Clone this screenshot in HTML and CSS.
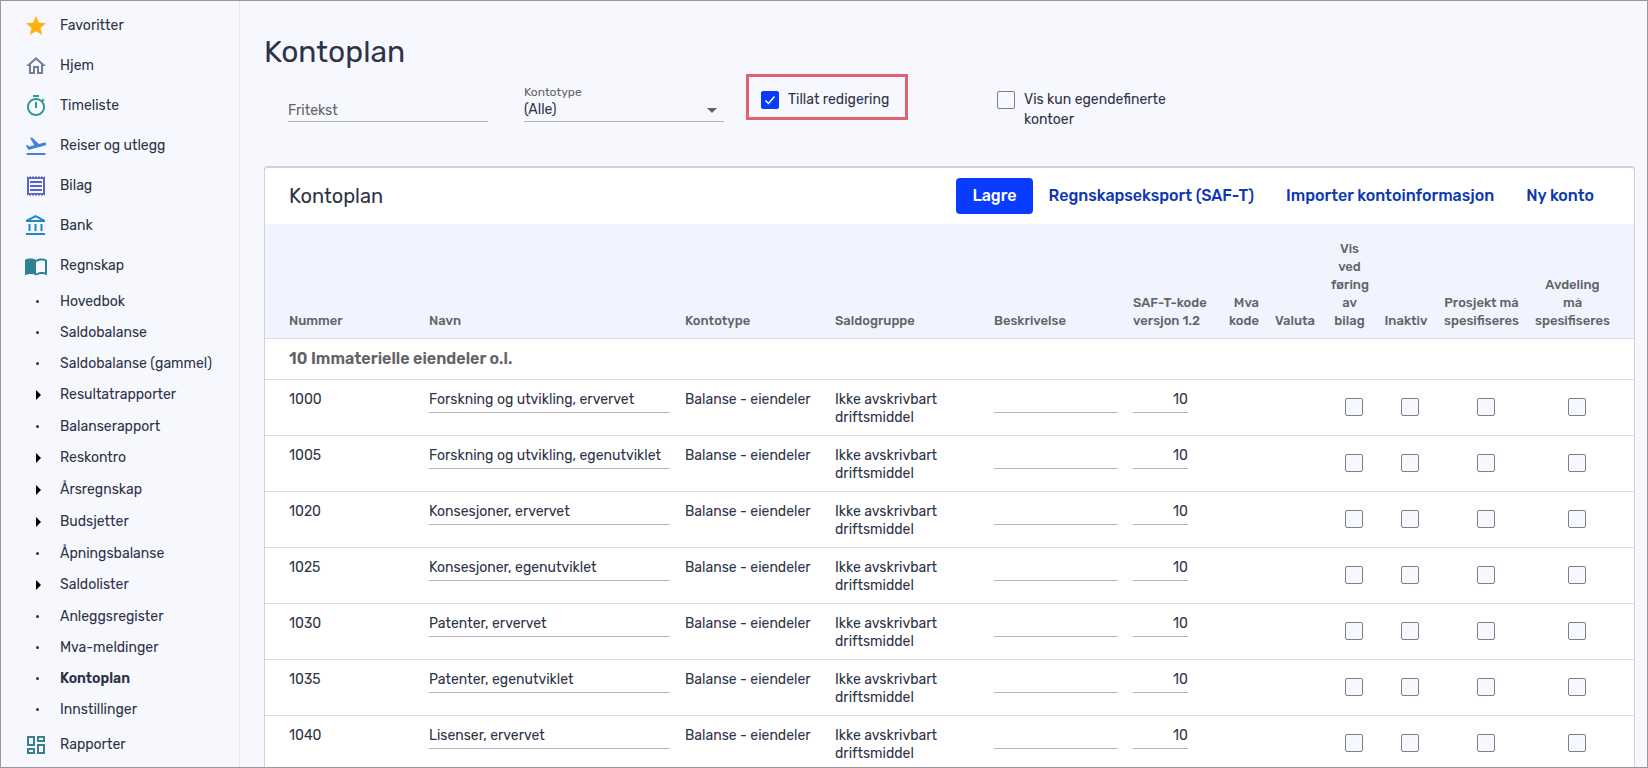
FILE: index.html
```
<!DOCTYPE html>
<html lang="no">
<head>
    <meta charset="UTF-8">
    <meta name="viewport" content="width=device-width, initial-scale=1.0">
    <title>Kontoplan</title>
    <link rel="stylesheet" href="styles.css">
</head>
<body>
    <div class="app">
        <nav class="sidebar">
            <a class="menu-item" href="#"><svg class="icon star" viewBox="0 0 24 24"><path d="M12 17.27L18.18 21l-1.64-7.03L22 9.24l-7.19-.61L12 2 9.19 8.63 2 9.24l5.46 4.73L5.82 21z"/></svg>Favoritter</a>
            <a class="menu-item" href="#"><svg class="icon home" viewBox="0 0 24 24"><path d="M12 5.69l5 4.5V18h-2v-6H9v6H7v-7.81l5-4.5M12 3L2 12h3v8h6v-6h2v6h6v-8h3L12 3z"/></svg>Hjem</a>
            <a class="menu-item" href="#"><svg class="icon timer" viewBox="0 0 24 24"><path d="M15 1H9v2h6V1zm-4 13h2V8h-2v6zm8.03-6.61l1.42-1.42c-.43-.51-.9-.99-1.41-1.41l-1.42 1.42C16.07 4.74 14.12 4 12 4c-4.97 0-9 4.03-9 9s4.02 9 9 9 9-4.03 9-9c0-2.12-.74-4.07-1.97-5.61zM12 20c-3.87 0-7-3.13-7-7s3.13-7 7-7 7 3.13 7 7-3.13 7-7 7z"/></svg>Timeliste</a>
            <a class="menu-item" href="#"><svg class="icon travel" viewBox="0 0 24 24"><path d="M2.5 19h19v2h-19zm19.57-9.36c-.21-.8-1.04-1.28-1.84-1.06L14.92 10l-6.9-6.43-1.93.51 4.14 7.17-4.97 1.33-1.97-1.54-1.45.39 1.82 3.16.77 1.33 1.6-.43 5.31-1.42 4.35-1.16L21 11.49c.81-.23 1.28-1.05 1.07-1.85z"/></svg>Reiser og utlegg</a>
            <a class="menu-item" href="#"><svg class="icon receipt" viewBox="0 0 24 24"><path d="M19.5 3.5L18 2l-1.5 1.5L15 2l-1.5 1.5L12 2l-1.5 1.5L9 2 7.5 3.5 6 2 4.5 3.5 3 2v20l1.5-1.5L6 22l1.5-1.5L9 22l1.5-1.5L12 22l1.5-1.5L15 22l1.5-1.5L18 22l1.5-1.5L21 22V2l-1.5 1.5zM19 19.09H5V4.91h14v14.18zM6 15h12v2H6zm0-4h12v2H6zm0-4h12v2H6z"/></svg>Bilag</a>
            <a class="menu-item" href="#"><svg class="icon bank" viewBox="0 0 24 24"><path d="M6.5 10h-2v7h2v-7zm6 0h-2v7h2v-7zm8.5 9H2v2h19v-2zm-2.5-9h-2v7h2v-7zm-7-6.74L16.71 6H6.29l5.21-2.74m0-2.26L2 6v2h19V6l-9.5-5z"/></svg>Bank</a>
            <a class="menu-item" href="#"><svg class="icon book" viewBox="0 0 24 24"><path d="M21 5c-1.11-.35-2.33-.5-3.5-.5-1.95 0-4.05.4-5.5 1.5-1.45-1.1-3.55-1.5-5.5-1.5S2.45 4.9 1 6v14.65c0 .25.25.5.5.5.1 0 .15-.05.25-.05C3.1 20.45 5.05 20 6.5 20c1.95 0 4.05.4 5.5 1.5 1.35-.85 3.8-1.5 5.5-1.5 1.65 0 3.35.3 4.75 1.05.1.05.15.05.25.05.25 0 .5-.25.5-.5V6c-.6-.45-1.25-.75-2-1zm0 13.5c-1.1-.35-2.3-.5-3.5-.5-1.7 0-4.15.65-5.5 1.5V8c1.35-.85 3.8-1.5 5.5-1.5 1.2 0 2.4.15 3.5.5v11.5z"/></svg>Regnskap</a>
            <div class="submenu">
                <a class="sub-item" href="#">Hovedbok</a>
                <a class="sub-item" href="#">Saldobalanse</a>
                <a class="sub-item" href="#">Saldobalanse (gammel)</a>
                <a class="sub-item expandable" href="#">Resultatrapporter</a>
                <a class="sub-item" href="#">Balanserapport</a>
                <a class="sub-item expandable" href="#">Reskontro</a>
                <a class="sub-item expandable" href="#">Årsregnskap</a>
                <a class="sub-item expandable" href="#">Budsjetter</a>
                <a class="sub-item" href="#">Åpningsbalanse</a>
                <a class="sub-item expandable" href="#">Saldolister</a>
                <a class="sub-item" href="#">Anleggsregister</a>
                <a class="sub-item" href="#">Mva-meldinger</a>
                <a class="sub-item active" href="#">Kontoplan</a>
                <a class="sub-item" href="#">Innstillinger</a>
            </div>
            <a class="menu-item" href="#"><svg class="icon reports" viewBox="0 0 24 24"><path d="M19 5v2h-4V5h4M9 5v6H5V5h4m10 8v6h-4v-6h4M9 17v2H5v-2h4M21 3h-8v6h8V3zM11 3H3v10h8V3zm10 8h-8v10h8V11zm-10 4H3v6h8v-6z"/></svg>Rapporter</a>
        </nav>

        <main class="content">
            <h1>Kontoplan</h1>

            <form class="filters">
                <div class="field">
                    <input type="text" id="fritekst" placeholder="Fritekst" aria-label="Fritekst">
                </div>
                <div class="field select-field">
                    <label for="kontotype">Kontotype</label>
                    <select id="kontotype">
                        <option>(Alle)</option>
                    </select>
                </div>
                <label class="check-field highlight"><input type="checkbox" class="checkbox" checked>Tillat redigering</label>
                <label class="check-field own-accounts"><input type="checkbox" class="checkbox">Vis kun egendefinerte kontoer</label>
            </form>

            <section class="card">
                <header class="card-header">
                    <h2>Kontoplan</h2>
                    <button type="button" class="button primary">Lagre</button>
                    <button type="button" class="button">Regnskapseksport (SAF-T)</button>
                    <button type="button" class="button">Importer kontoinformasjon</button>
                    <button type="button" class="button">Ny konto</button>
                </header>
                <table class="accounts">
                    <colgroup>
                        <col class="col-number">
                        <col class="col-name">
                        <col class="col-type">
                        <col class="col-group">
                        <col class="col-description">
                        <col class="col-saft">
                        <col class="col-vat">
                        <col class="col-currency">
                        <col class="col-show">
                        <col class="col-inactive">
                        <col class="col-project">
                        <col class="col-department">
                    </colgroup>
                    <thead>
                        <tr>
                            <th>Nummer</th>
                            <th>Navn</th>
                            <th>Kontotype</th>
                            <th>Saldogruppe</th>
                            <th>Beskrivelse</th>
                            <th>SAF-T-kode versjon 1.2</th>
                            <th class="right">Mva kode</th>
                            <th>Valuta</th>
                            <th class="center">Vis ved føring av bilag</th>
                            <th class="center">Inaktiv</th>
                            <th class="center">Prosjekt må spesifiseres</th>
                            <th class="center">Avdeling må spesifiseres</th>
                        </tr>
                    </thead>
                    <tbody>
                        <tr class="group-row">
                            <td colspan="12">10 Immaterielle eiendeler o.l.</td>
                        </tr>
                        <tr>
                            <td>1000</td>
                            <td><input type="text" class="cell-input" aria-label="Navn" value="Forskning og utvikling, ervervet"></td>
                            <td>Balanse - eiendeler</td>
                            <td>Ikke avskrivbart driftsmiddel</td>
                            <td><input type="text" class="cell-input" aria-label="Beskrivelse"></td>
                            <td><input type="text" class="cell-input code" aria-label="SAF-T-kode" value="10"></td>
                            <td></td>
                            <td></td>
                            <td class="check"><input type="checkbox" class="checkbox" aria-label="Vis ved føring av bilag"></td>
                            <td class="check"><input type="checkbox" class="checkbox" aria-label="Inaktiv"></td>
                            <td class="check"><input type="checkbox" class="checkbox" aria-label="Prosjekt må spesifiseres"></td>
                            <td class="check"><input type="checkbox" class="checkbox" aria-label="Avdeling må spesifiseres"></td>
                        </tr>
                        <tr>
                            <td>1005</td>
                            <td><input type="text" class="cell-input" aria-label="Navn" value="Forskning og utvikling, egenutviklet"></td>
                            <td>Balanse - eiendeler</td>
                            <td>Ikke avskrivbart driftsmiddel</td>
                            <td><input type="text" class="cell-input" aria-label="Beskrivelse"></td>
                            <td><input type="text" class="cell-input code" aria-label="SAF-T-kode" value="10"></td>
                            <td></td>
                            <td></td>
                            <td class="check"><input type="checkbox" class="checkbox" aria-label="Vis ved føring av bilag"></td>
                            <td class="check"><input type="checkbox" class="checkbox" aria-label="Inaktiv"></td>
                            <td class="check"><input type="checkbox" class="checkbox" aria-label="Prosjekt må spesifiseres"></td>
                            <td class="check"><input type="checkbox" class="checkbox" aria-label="Avdeling må spesifiseres"></td>
                        </tr>
                        <tr>
                            <td>1020</td>
                            <td><input type="text" class="cell-input" aria-label="Navn" value="Konsesjoner, ervervet"></td>
                            <td>Balanse - eiendeler</td>
                            <td>Ikke avskrivbart driftsmiddel</td>
                            <td><input type="text" class="cell-input" aria-label="Beskrivelse"></td>
                            <td><input type="text" class="cell-input code" aria-label="SAF-T-kode" value="10"></td>
                            <td></td>
                            <td></td>
                            <td class="check"><input type="checkbox" class="checkbox" aria-label="Vis ved føring av bilag"></td>
                            <td class="check"><input type="checkbox" class="checkbox" aria-label="Inaktiv"></td>
                            <td class="check"><input type="checkbox" class="checkbox" aria-label="Prosjekt må spesifiseres"></td>
                            <td class="check"><input type="checkbox" class="checkbox" aria-label="Avdeling må spesifiseres"></td>
                        </tr>
                        <tr>
                            <td>1025</td>
                            <td><input type="text" class="cell-input" aria-label="Navn" value="Konsesjoner, egenutviklet"></td>
                            <td>Balanse - eiendeler</td>
                            <td>Ikke avskrivbart driftsmiddel</td>
                            <td><input type="text" class="cell-input" aria-label="Beskrivelse"></td>
                            <td><input type="text" class="cell-input code" aria-label="SAF-T-kode" value="10"></td>
                            <td></td>
                            <td></td>
                            <td class="check"><input type="checkbox" class="checkbox" aria-label="Vis ved føring av bilag"></td>
                            <td class="check"><input type="checkbox" class="checkbox" aria-label="Inaktiv"></td>
                            <td class="check"><input type="checkbox" class="checkbox" aria-label="Prosjekt må spesifiseres"></td>
                            <td class="check"><input type="checkbox" class="checkbox" aria-label="Avdeling må spesifiseres"></td>
                        </tr>
                        <tr>
                            <td>1030</td>
                            <td><input type="text" class="cell-input" aria-label="Navn" value="Patenter, ervervet"></td>
                            <td>Balanse - eiendeler</td>
                            <td>Ikke avskrivbart driftsmiddel</td>
                            <td><input type="text" class="cell-input" aria-label="Beskrivelse"></td>
                            <td><input type="text" class="cell-input code" aria-label="SAF-T-kode" value="10"></td>
                            <td></td>
                            <td></td>
                            <td class="check"><input type="checkbox" class="checkbox" aria-label="Vis ved føring av bilag"></td>
                            <td class="check"><input type="checkbox" class="checkbox" aria-label="Inaktiv"></td>
                            <td class="check"><input type="checkbox" class="checkbox" aria-label="Prosjekt må spesifiseres"></td>
                            <td class="check"><input type="checkbox" class="checkbox" aria-label="Avdeling må spesifiseres"></td>
                        </tr>
                        <tr>
                            <td>1035</td>
                            <td><input type="text" class="cell-input" aria-label="Navn" value="Patenter, egenutviklet"></td>
                            <td>Balanse - eiendeler</td>
                            <td>Ikke avskrivbart driftsmiddel</td>
                            <td><input type="text" class="cell-input" aria-label="Beskrivelse"></td>
                            <td><input type="text" class="cell-input code" aria-label="SAF-T-kode" value="10"></td>
                            <td></td>
                            <td></td>
                            <td class="check"><input type="checkbox" class="checkbox" aria-label="Vis ved føring av bilag"></td>
                            <td class="check"><input type="checkbox" class="checkbox" aria-label="Inaktiv"></td>
                            <td class="check"><input type="checkbox" class="checkbox" aria-label="Prosjekt må spesifiseres"></td>
                            <td class="check"><input type="checkbox" class="checkbox" aria-label="Avdeling må spesifiseres"></td>
                        </tr>
                        <tr>
                            <td>1040</td>
                            <td><input type="text" class="cell-input" aria-label="Navn" value="Lisenser, ervervet"></td>
                            <td>Balanse - eiendeler</td>
                            <td>Ikke avskrivbart driftsmiddel</td>
                            <td><input type="text" class="cell-input" aria-label="Beskrivelse"></td>
                            <td><input type="text" class="cell-input code" aria-label="SAF-T-kode" value="10"></td>
                            <td></td>
                            <td></td>
                            <td class="check"><input type="checkbox" class="checkbox" aria-label="Vis ved føring av bilag"></td>
                            <td class="check"><input type="checkbox" class="checkbox" aria-label="Inaktiv"></td>
                            <td class="check"><input type="checkbox" class="checkbox" aria-label="Prosjekt må spesifiseres"></td>
                            <td class="check"><input type="checkbox" class="checkbox" aria-label="Avdeling må spesifiseres"></td>
                        </tr>
                    </tbody>
                </table>
            </section>
        </main>
    </div>
</body>
</html>
```
FILE: styles.css
```
:root {
    --bg-color: #f7f8fe;
    --text-color: #2d3348;
    --muted-color: #636366;
    --card-bg: #fff;
    --primary-color: #0a3cff;
    --link-color: #0c38b0;
    --line-color: #dcdce0;
    --input-line: #b0b0b5;
    --frame-color: #98989f;
}

* {
    box-sizing: border-box;
}

body {
    margin: 0;
    font-family: Rubik, Roboto, "Liberation Sans", sans-serif;
    font-size: 14px;
    line-height: 18px;
    color: var(--text-color);
    background-color: var(--bg-color);
}

input,
select,
button {
    font: inherit;
    color: inherit;
}

.app {
    display: flex;
    height: 100vh;
    border: 1px solid var(--frame-color);
    overflow: hidden;
}

/* Sidebar */
.sidebar {
    flex: 0 0 239px;
    padding-top: 5px;
    border-right: 1px solid #e4e5ec;
}

.menu-item {
    display: flex;
    align-items: center;
    gap: 12px;
    height: 40px;
    padding-left: 23px;
    color: inherit;
    text-decoration: none;
}

.icon {
    width: 24px;
    height: 24px;
    fill: currentColor;
}

.star { color: #ffb20d; }
.home { color: #728096; }
.timer { color: #319795; }
.travel { color: #4285d8; }
.receipt { color: #5765c8; }
.bank { color: #1a8ac4; }
.book { color: #2b8292; }
.reports { color: #37808f; }

.sub-item {
    display: flex;
    align-items: center;
    height: 31px;
    padding-left: 35px;
    color: inherit;
    text-decoration: none;
}

.sub-item::before {
    content: "";
    width: 3px;
    height: 3px;
    margin-right: 21px;
    border-radius: 50%;
    background-color: #333;
}

.sub-item.expandable {
    height: 32px;
}

.sub-item.expandable::before {
    width: 0;
    height: 0;
    margin-right: 19px;
    border-top: 5px solid transparent;
    border-bottom: 5px solid transparent;
    border-left: 5px solid #000;
    border-radius: 0;
    background: none;
}

.sub-item.active {
    font-weight: 600;
}

/* Content */
.content {
    flex: 1;
    min-width: 0;
    padding: 33px 12px 0 24px;
}

h1 {
    margin: 0;
    font-size: 30px;
    line-height: 36px;
    font-weight: 400;
}

.filters {
    display: flex;
    align-items: flex-start;
    height: 96px;
    padding: 4px 0 0 24px;
}

.field {
    display: flex;
    flex-direction: column;
    justify-content: flex-end;
    width: 200px;
    height: 48px;
    margin-right: 36px;
}

.field label {
    font-size: 12px;
    line-height: 16px;
    color: var(--muted-color);
}

.field input,
.field select {
    width: 100%;
    height: 22px;
    padding: 0;
    border: none;
    border-bottom: 1px solid var(--input-line);
    border-radius: 0;
    outline: none;
    background: transparent;
}

.field input::placeholder {
    color: var(--muted-color);
}

.select-field {
    position: relative;
    margin-right: 22px;
}

.field select {
    appearance: none;
    padding-bottom: 2px;
}

.select-field::after {
    content: "";
    position: absolute;
    right: 7px;
    bottom: 9px;
    border-left: 5px solid transparent;
    border-right: 5px solid transparent;
    border-top: 5px solid #666;
}

.check-field {
    display: flex;
    gap: 9px;
    line-height: 20px;
}

.check-field .checkbox {
    margin-top: 1px;
}

.highlight {
    width: 162px;
    height: 46px;
    padding: 13px 12px;
    border: 3px solid #de6470;
    white-space: nowrap;
}

.own-accounts {
    width: 190px;
    margin: 16px 0 0 89px;
}

.checkbox {
    flex: none;
    width: 18px;
    height: 18px;
    margin: 0;
    appearance: none;
    border: 1px solid #7d7f8c;
    border-radius: 2px;
    background-color: var(--bg-color);
}

.checkbox:checked {
    border-color: var(--primary-color);
    background: var(--primary-color) url("data:image/svg+xml,%3Csvg xmlns='http://www.w3.org/2000/svg' viewBox='0 0 16 16'%3E%3Cpath d='M3.5 8.5l3 3 6-7' fill='none' stroke='white' stroke-width='1.5'/%3E%3C/svg%3E") center / 16px no-repeat;
}

/* Card */
.card {
    background-color: var(--card-bg);
    border: 1px solid #d0d0d6;
    border-top-width: 2px;
    border-radius: 4px;
}

.card-header {
    display: flex;
    align-items: center;
    height: 56px;
    padding: 0 24px;
}

.card-header h2 {
    margin: 0 auto 0 0;
    font-size: 20px;
    font-weight: 400;
}

.button {
    height: 36px;
    padding: 0 16px;
    border: none;
    border-radius: 4px;
    background: none;
    color: var(--link-color);
    font-size: 16px;
    font-weight: 500;
    cursor: pointer;
}

.button.primary {
    background-color: var(--primary-color);
    color: #fff;
}

/* Table */
.accounts {
    width: 100%;
    table-layout: fixed;
    border-collapse: collapse;
}

.col-number { width: 156px; }
.col-name { width: 256px; }
.col-type { width: 150px; }
.col-group { width: 159px; }
.col-description { width: 139px; }
.col-saft { width: 90px; }
.col-vat { width: 52px; }
.col-currency { width: 56px; }
.col-show { width: 53px; }
.col-inactive { width: 60px; }
.col-project { width: 91px; }
.col-department { width: 107px; }

.accounts th {
    height: 114px;
    padding: 0 8px 8px;
    background-color: #f1f3ff;
    color: var(--muted-color);
    font-size: 13px;
    font-weight: 500;
    text-align: left;
    vertical-align: bottom;
}

.accounts tr {
    border-bottom: 1px solid var(--line-color);
}

.accounts td {
    height: 56px;
    padding: 11px 8px 0;
    vertical-align: top;
}

.accounts th:first-child,
.accounts td:first-child {
    padding-left: 24px;
}

.accounts th:last-child,
.accounts td:last-child {
    padding-right: 24px;
}

.accounts th.right {
    text-align: right;
}

.accounts th.center {
    text-align: center;
}

.accounts .group-row td {
    height: 41px;
    color: var(--muted-color);
    font-size: 16px;
    font-weight: 600;
}

.cell-input {
    display: block;
    width: 100%;
    height: 22px;
    padding: 0 0 3px;
    border: none;
    border-bottom: 1px solid var(--input-line);
    outline: none;
    background: transparent;
}

.cell-input.code {
    width: 55px;
    text-align: right;
}

.accounts .check {
    padding-top: 18px;
    text-align: center;
}

.check .checkbox {
    display: block;
    margin: 0 auto;
    position: relative;
    left: 4px;
}
```
